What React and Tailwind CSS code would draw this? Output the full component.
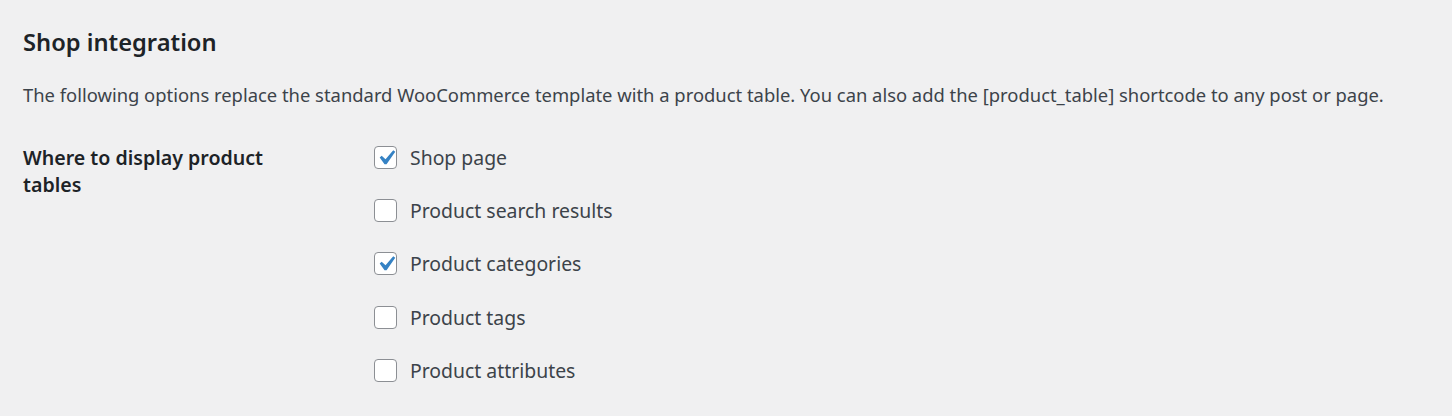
const options = [
  { label: "Shop page", checked: true },
  { label: "Product search results", checked: false },
  { label: "Product categories", checked: true },
  { label: "Product tags", checked: false },
  { label: "Product attributes", checked: false },
];

const Checkbox = ({ checked }) => (
  <span className="flex h-[23px] w-[23px] shrink-0 items-center justify-center rounded-[4px] border border-[#8c8f94] bg-white">
    {checked ? (
      <svg viewBox="0 0 20 20" className="-m-[5px] h-[30px] w-[30px] shrink-0">
        <path d="M14.83 4.89l1.34.94-5.81 8.38H9.02L5.78 9.67l1.34-1.25 2.57 2.4z" fill="#3582c4" />
      </svg>
    ) : null}
  </span>
);

export default function App() {
  return (
    <div
      className="min-h-[416px] bg-[#f0f0f1] px-[23px] pt-[26px] text-[#3c434a]"
      style={{ fontFamily: '"Noto Sans", "Open Sans", sans-serif' }}
    >
      <h2 className="text-[23.7px] font-semibold leading-[32px] text-[#1d2327]">Shop integration</h2>
      <p className="mt-[24px] text-[18.4px] leading-[26px]">
        The following options replace the standard WooCommerce template with a product table. You can also add the [product_table] shortcode to any post or page.
      </p>
      <div className="mt-[36px] flex">
        <div className="w-[351px] shrink-0 pr-[70px] text-[19.6px] font-semibold leading-[27px] text-[#1d2327]">
          Where to display product tables
        </div>
        <div className="flex flex-col gap-[26.2px]">
          {options.map((o) => (
            <label key={o.label} className="flex h-[27px] items-center gap-[13px] text-[19.4px]">
              <Checkbox checked={o.checked} />
              <span>{o.label}</span>
            </label>
          ))}
        </div>
      </div>
    </div>
  );
}
